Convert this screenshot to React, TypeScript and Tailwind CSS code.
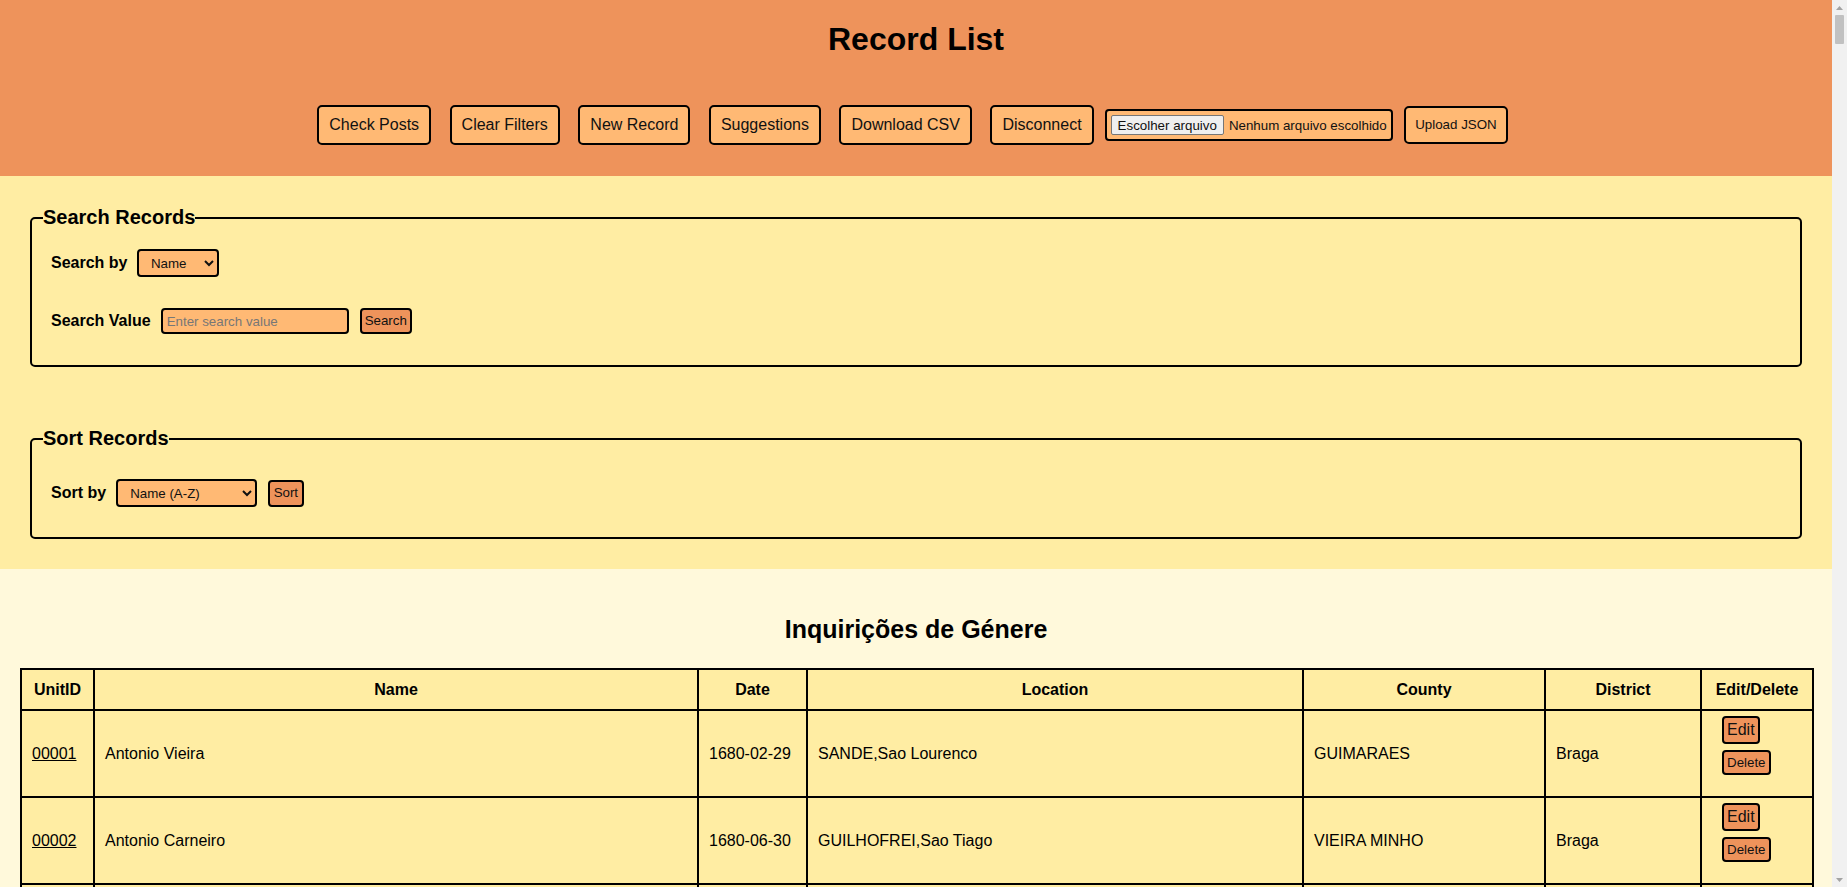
import React from "react";

type Row = [string, string, string, string, string, string];

const rows: Row[] = [
  ["00001", "Antonio Vieira", "1680-02-29", "SANDE,Sao Lourenco", "GUIMARAES", "Braga"],
  ["00002", "Antonio Carneiro", "1680-06-30", "GUILHOFREI,Sao Tiago", "VIEIRA MINHO", "Braga"],
  ["00003", "Manuel Pereira", "1680-07-15", "RUILHE,Sao Paio", "BRAGA", "Braga"],
];

function TopButton({ children, first }: { children: React.ReactNode; first?: boolean }) {
  return (
    <button
      className={
        (first ? "" : "ml-[18.5px] ") +
        "bg-[#FFB974] border-2 border-black rounded-[5px] px-[10px] py-[9px] text-[16px] leading-[18px] text-[#111]"
      }
    >
      {children}
    </button>
  );
}

function Scrollbar() {
  return (
    <div className="fixed right-0 top-0 flex h-screen w-[15px] flex-col items-center bg-[#F1F1F1]">
      <div className="flex h-[15px] w-[15px] items-center justify-center">
        <svg width="7" height="4" viewBox="0 0 7 4">
          <path d="M3.5 0 L7 4 L0 4 Z" fill="#A3A3A3" />
        </svg>
      </div>
      <div className="h-[29px] w-[9px] rounded-[1px] bg-[#C1C1C1]" />
      <div className="flex-1" />
      <div className="flex h-[15px] w-[15px] items-center justify-center">
        <svg width="7" height="4" viewBox="0 0 7 4">
          <path d="M0 0 L7 0 L3.5 4 Z" fill="#A3A3A3" />
        </svg>
      </div>
    </div>
  );
}

export default function App() {
  return (
    <div className="min-h-screen bg-[#FFF9DB]">
      <div className="mr-[15px] font-['Liberation_Sans',Arial,sans-serif] text-black">
        <header className="bg-[#EE935B] pb-[31px]">
          <h1 className="pt-[21px] text-center text-[32px] font-bold leading-[37px]">Record List</h1>
          <div className="mt-[47px] flex items-center justify-center pr-[7px]">
            <TopButton first>Check Posts</TopButton>
            <TopButton>Clear Filters</TopButton>
            <TopButton>New Record</TopButton>
            <TopButton>Suggestions</TopButton>
            <TopButton>Download CSV</TopButton>
            <TopButton>Disconnect</TopButton>
            <div className="ml-[11px] flex h-[32px] items-center rounded-[4px] border-2 border-black bg-[#FFB974] px-[4px] text-[13.33px] text-[#111]">
              <span className="flex h-[20px] items-center rounded-[2px] border border-[#767676] bg-[#EFEFEF] px-[6px] leading-[15px]">
                Escolher arquivo
              </span>
              <span className="ml-[5px] leading-[15px]">Nenhum arquivo escolhido</span>
            </div>
            <button className="ml-[11.5px] rounded-[5px] border-2 border-black bg-[#FFB974] px-[9px] py-[9px] text-[13.33px] leading-[16px] text-[#111]">
              Upload JSON
            </button>
          </div>
        </header>

        <section className="bg-[#FFEDA3] px-[30px] pt-[30px] pb-[30px]">
          <fieldset className="rounded-[5px] border-2 border-black px-[11px] pb-[31px]">
            <legend className="p-0 text-[20px] font-bold leading-[23px]">Search Records</legend>
            <div className="ml-[8px] mt-[20px] flex h-[28px] items-center">
              <label className="mr-[9.5px] text-[16px] font-bold">Search by</label>
              <select
                defaultValue="name"
                className="h-[28px] w-[82px] rounded-[4px] border-2 border-black bg-[#FFB974] pl-[8px] text-[13.33px] text-[#111]"
              >
                <option value="name">Name</option>
                <option value="unitid">UnitID</option>
                <option value="date">Date</option>
                <option value="location">Location</option>
                <option value="county">County</option>
                <option value="district">District</option>
              </select>
            </div>
            <div className="ml-[8px] mt-[31px] flex h-[26px] items-center">
              <label className="mr-[10px] text-[16px] font-bold">Search Value</label>
              <input
                type="text"
                placeholder="Enter search value"
                className="h-[26px] w-[188px] rounded-[4px] border-2 border-black bg-[#FFB974] px-[4px] text-[13.33px] text-[#111] placeholder:text-[#777]"
              />
              <button className="ml-[11px] h-[26px] rounded-[4px] border-2 border-black bg-[#EE935B] px-[3px] text-[13.33px] leading-[16px] text-[#111]">
                Search
              </button>
            </div>
          </fieldset>

          <fieldset className="mt-[60px] rounded-[5px] border-2 border-black px-[11px] pb-[30px]">
            <legend className="p-0 text-[20px] font-bold leading-[23px]">Sort Records</legend>
            <div className="ml-[8px] mt-[29px] flex h-[28px] items-center">
              <label className="mr-[10px] text-[16px] font-bold">Sort by</label>
              <select
                defaultValue="name-asc"
                className="h-[28px] w-[141px] rounded-[4px] border-2 border-black bg-[#FFB974] pl-[8px] text-[13.33px] text-[#111]"
              >
                <option value="name-asc">Name (A-Z)</option>
                <option value="name-desc">Name (Z-A)</option>
                <option value="date-asc">Date (Oldest)</option>
                <option value="date-desc">Date (Newest)</option>
              </select>
              <button className="ml-[10.5px] h-[27px] rounded-[4px] border-2 border-black bg-[#EE935B] px-[4px] text-[13.33px] leading-[16px] text-[#111]">
                Sort
              </button>
            </div>
          </fieldset>
        </section>

        <div className="px-[20px] pt-[46px] pb-[20px]">
          <h2 className="text-center text-[25px] font-bold leading-[28px]">Inquirições de Génere</h2>
          <table className="mt-[25px] w-full table-fixed border-collapse border-2 border-black bg-[#FFEDA3] text-[16px]">
            <colgroup>
              <col className="w-[73px]" />
              <col className="w-[604px]" />
              <col className="w-[109px]" />
              <col className="w-[496px]" />
              <col className="w-[242px]" />
              <col className="w-[156px]" />
              <col className="w-[112px]" />
            </colgroup>
            <thead>
              <tr>
                {["UnitID", "Name", "Date", "Location", "County", "District", "Edit/Delete"].map((h) => (
                  <th key={h} className="border-2 border-black py-[10px] text-center font-bold leading-[19px]">
                    {h}
                  </th>
                ))}
              </tr>
            </thead>
            <tbody>
              {rows.map((r) => (
                <tr key={r[0]}>
                  <td className="border-2 border-black px-[10px] leading-[19px]">
                    <a href="#" className="text-black underline">
                      {r[0]}
                    </a>
                  </td>
                  <td className="border-2 border-black px-[10px] leading-[19px]">{r[1]}</td>
                  <td className="border-2 border-black px-[10px] leading-[19px]">{r[2]}</td>
                  <td className="border-2 border-black px-[10px] leading-[19px]">{r[3]}</td>
                  <td className="border-2 border-black px-[10px] leading-[19px]">{r[4]}</td>
                  <td className="border-2 border-black px-[10px] leading-[19px]">{r[5]}</td>
                  <td className="border-2 border-black pl-[20px] pr-[4px] pt-[5px] pb-[21px]">
                    <div className="flex flex-col items-start gap-[6px]">
                      <button className="rounded-[4px] border-2 border-black bg-[#EE935B] px-[3px] py-[3px] text-[16px] leading-[18px] text-[#111]">
                        Edit
                      </button>
                      <button className="rounded-[4px] border-2 border-black bg-[#EE935B] px-[3px] py-[3px] text-[13.33px] leading-[15px] text-[#111]">
                        Delete
                      </button>
                    </div>
                  </td>
                </tr>
              ))}
            </tbody>
          </table>
        </div>
      </div>
      <Scrollbar />
    </div>
  );
}
